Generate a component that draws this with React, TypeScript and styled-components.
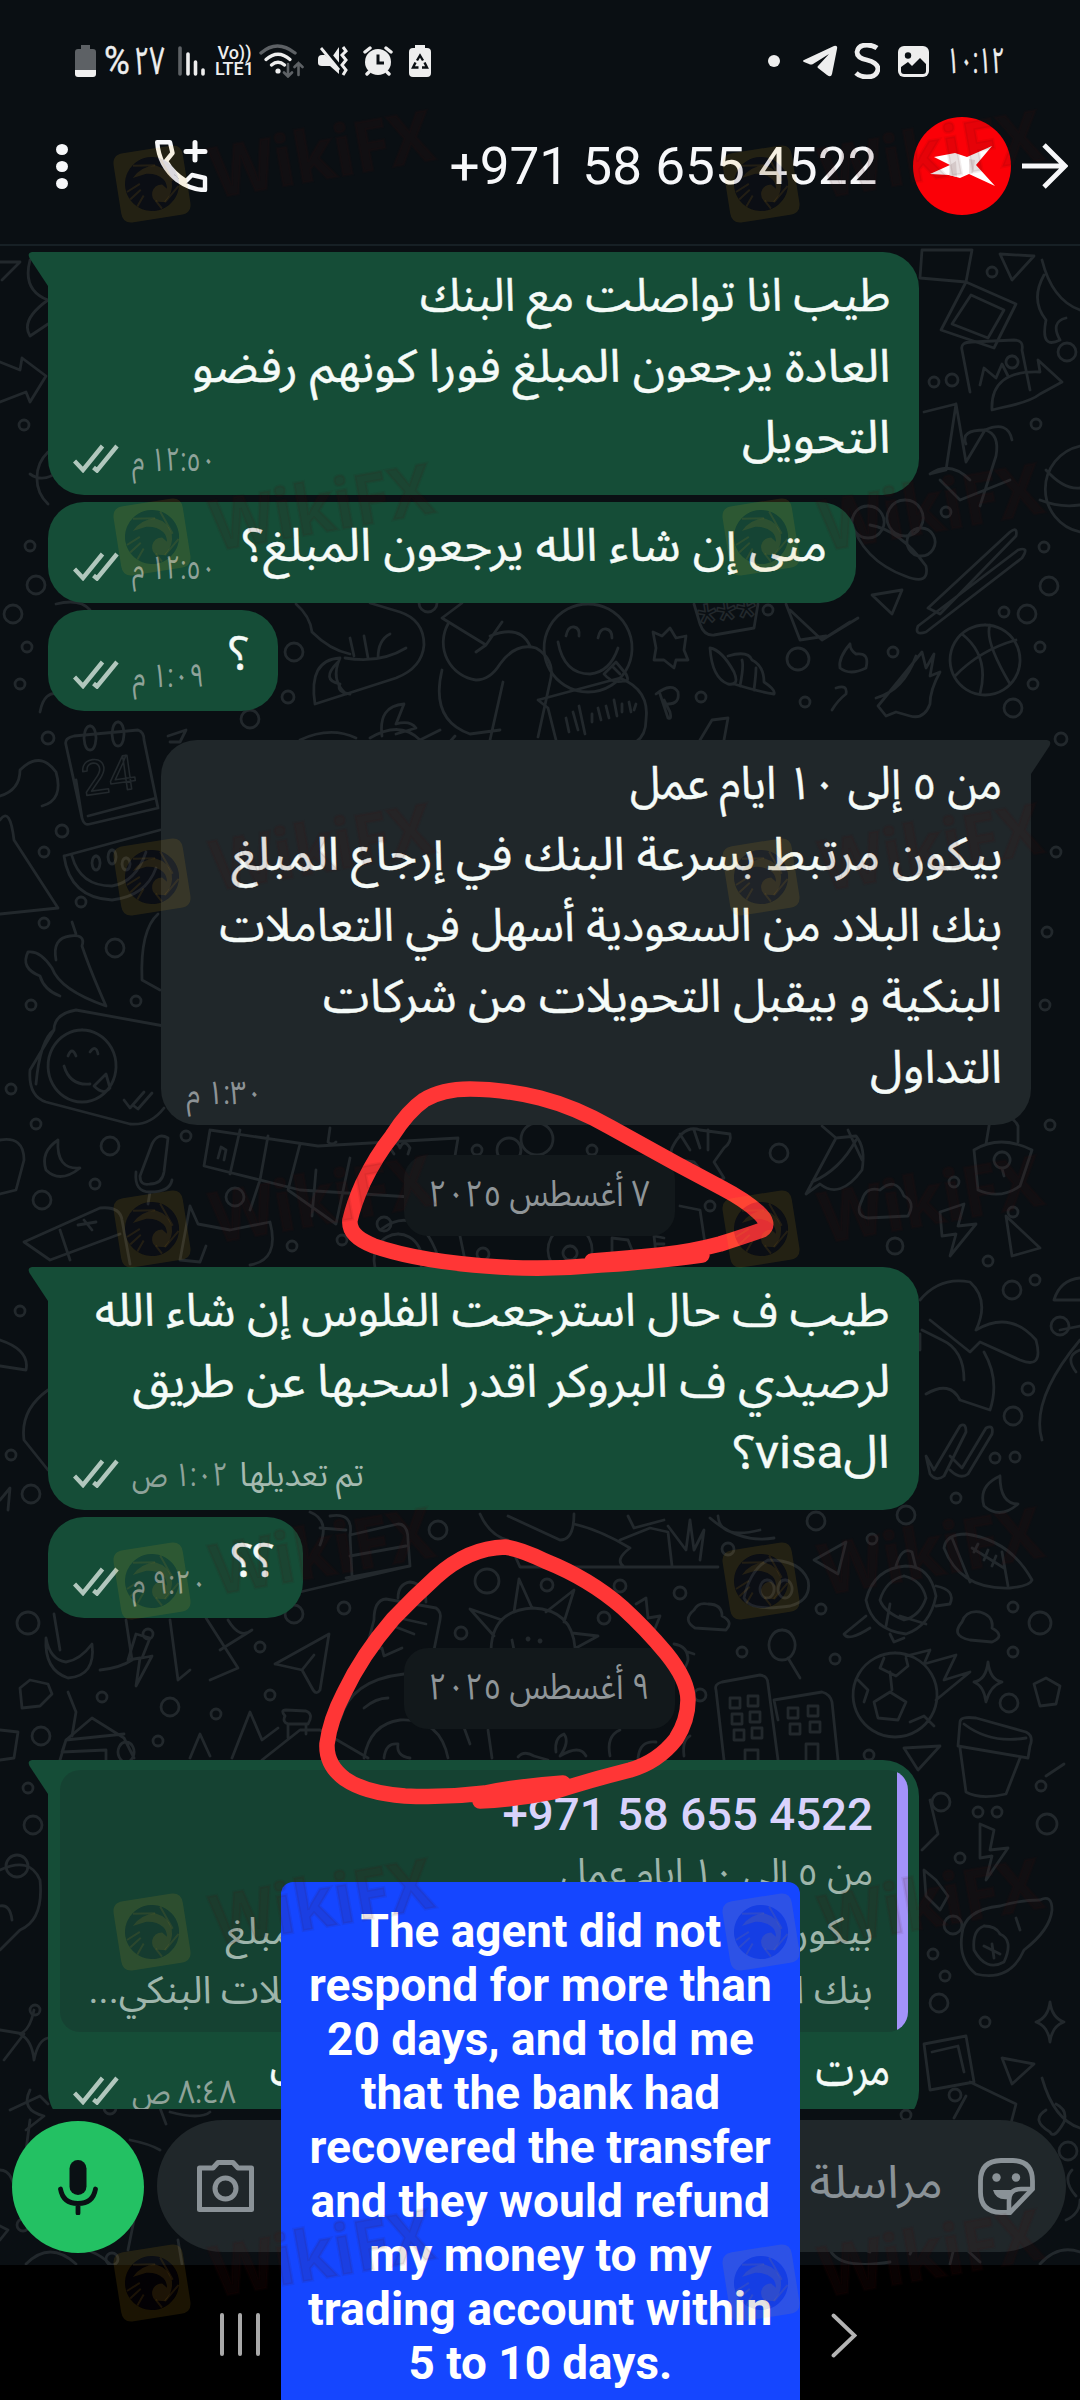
import React, { useLayoutEffect, useRef, useState } from 'react';
import styled, { createGlobalStyle } from 'styled-components';

interface FitProps {
  width: number;
  children: React.ReactNode;
}

// squeezes a single line of text to a given width
const Fit: React.FC<FitProps> = ({ width, children }) => {
  const ref = useRef<HTMLSpanElement>(null);
  const [scale, setScale] = useState(1);

  useLayoutEffect(() => {
    if (ref.current) {
      setScale(width / ref.current.offsetWidth);
    }
  }, [width]);

  return (
    <FitBox style={{ width }}>
      <FitText ref={ref} style={{ transform: `scaleX(${scale})` }}>
        {children}
      </FitText>
    </FitBox>
  );
};

const Ticks = () => (
  <TicksIcon viewBox="0 0 46 29">
    <path d="M1.5 17L10 26L29.5 2M20.500 23.500L24 26.500L44 2" />
  </TicksIcon>
);

const Tail = ({ incoming }: { incoming?: boolean }) => (
  <TailShape viewBox="0 0 22 34" $incoming={incoming}>
    <path d="M22 0H4Q-1 1 1.500 6L20 34H22Z" />
  </TailShape>
);

interface Line {
  text: string;
  width: number;
}

interface MessageProps {
  lines: Line[];
  width: number;
  time: string;
  timeWidth: number;
  incoming?: boolean;
  tail?: boolean;
  edited?: string;
  quote?: React.ReactNode;
}

const Message: React.FC<MessageProps> = props => {
  const { lines, width, time, timeWidth, incoming, tail, edited, quote } = props;
  return (
    <Bubble $width={width} $incoming={incoming} $tail={tail}>
      {tail && <Tail incoming={incoming} />}
      {quote}
      <BubbleText>
        {lines.map(line => (
          <TextLine key={line.text}>
            <Fit width={line.width}>{line.text}</Fit>
          </TextLine>
        ))}
      </BubbleText>
      <Meta $incoming={incoming}>
        {edited && (
          <Edited>
            <Fit width={124}>{edited}</Fit>
          </Edited>
        )}
        <Fit width={timeWidth}>{time}</Fit>
        {!incoming && <Ticks />}
      </Meta>
    </Bubble>
  );
};

const first: Line[] = [
  { text: 'طيب انا تواصلت مع البنك', width: 470 },
  { text: 'العادة يرجعون المبلغ فورا كونهم رفضو', width: 698 },
  { text: 'التحويل', width: 148 },
];

const answer: Line[] = [
  { text: 'من ٥ إلى ١٠ ايام عمل', width: 372 },
  { text: 'بيكون مرتبط بسرعة البنك في إرجاع المبلغ', width: 771 },
  { text: 'بنك البلاد من السعودية أسهل في التعاملات', width: 783 },
  { text: 'البنكية و بيقبل التحويلات من شركات', width: 679 },
  { text: 'التداول', width: 132 },
];

const visa: Line[] = [
  { text: 'طيب ف حال استرجعت الفلوس إن شاء الله', width: 795 },
  { text: 'لرصيدي ف البروكر اقدر اسحبها عن طريق', width: 758 },
  { text: 'الvisa؟', width: 156 },
];

const caption: Line[] = [
  { text: 'The agent did not', width: 361 },
  { text: 'respond for more than', width: 463 },
  { text: '20 days, and told me', width: 427 },
  { text: 'that the bank had', width: 359 },
  { text: 'recovered the transfer', width: 461 },
  { text: 'and they would refund', width: 459 },
  { text: 'my money to my', width: 343 },
  { text: 'trading account within', width: 464 },
  { text: '5 to 10 days.', width: 264 },
];

const watermarkRows = [144, 497, 837, 1189, 1541, 1892, 2243];

// small rings scattered between the doodles: x, y, r
const rings = [
  [992, 272, 5], [934, 382, 5], [952, 380, 6], [1067, 352, 9], [24, 425, 5], [1036, 424, 5], [946, 512, 5],
  [30, 546, 5], [13, 614, 9], [36, 585, 9], [1044, 547, 5], [1049, 586, 9], [1004, 612, 5], [1027, 614, 9],
  [27, 647, 5], [20, 684, 5], [294, 652, 9], [288, 697, 6], [250, 719, 9], [428, 603, 9], [768, 610, 5],
  [798, 659, 11], [701, 697, 5], [805, 702, 5], [893, 652, 5], [1040, 647, 5], [1033, 684, 5], [1013, 708, 9],
  [48, 738, 6], [62, 831, 6], [44, 852, 5], [81, 902, 5], [44, 923, 5], [115, 948, 9], [31, 1005, 5],
  [136, 1001, 5], [11, 1089, 5], [36, 1124, 5], [1061, 739, 6], [1056, 852, 5], [1047, 932, 5], [1045, 1005, 5],
  [110, 1146, 9], [186, 1136, 5], [95, 1184, 5], [42, 1200, 9], [235, 1197, 9], [477, 1150, 5], [509, 1150, 12],
  [537, 1139, 16], [592, 1150, 5], [779, 1153, 9], [1050, 1125, 5], [954, 1182, 5], [710, 1206, 5], [384, 1224, 7],
  [342, 1240, 5], [292, 1246, 5], [483, 1254, 6], [1013, 1212, 5], [895, 1246, 8], [988, 1261, 5], [1012, 1290, 9],
  [1035, 1280, 5], [20, 1311, 5], [1060, 1326, 9], [1028, 1389, 6], [1013, 1416, 9], [11, 1455, 5], [31, 1494, 9],
  [995, 1458, 5], [1015, 1457, 5], [956, 1498, 5], [438, 1530, 9], [816, 1521, 9], [906, 1515, 9], [728, 1549, 6],
  [872, 1539, 5], [487, 1581, 12], [547, 1585, 6], [620, 1586, 6], [680, 1593, 6], [604, 1618, 6], [821, 1609, 5],
  [28, 1623, 11], [148, 1634, 5], [344, 1608, 6], [294, 1614, 9], [461, 1633, 6], [260, 1647, 5], [742, 1652, 5],
  [835, 1659, 5], [1013, 1607, 5], [1040, 1623, 11], [102, 1697, 5], [170, 1707, 9], [270, 1695, 5], [700, 1695, 6],
  [41, 1736, 9], [158, 1741, 5], [216, 1714, 5], [1009, 1703, 9], [1013, 1652, 5], [869, 1755, 5], [941, 1802, 9],
  [28, 1788, 5], [978, 1812, 5], [997, 1812, 5], [33, 1825, 9], [17, 1866, 11], [1041, 1786, 5], [960, 1858, 5],
  [1047, 1824, 10], [953, 1925, 9], [945, 1976, 5], [933, 1954, 5], [939, 2003, 9], [985, 2022, 5], [955, 2095, 6],
  [906, 2115, 5], [1068, 2151, 9], [110, 2108, 6], [112, 2259, 6], [23, 2225, 6], [35, 2010, 5],
];

const doodles = [
  // photo frames, leaf and palms along the right edge
  'M922 250L920 278L966 282L972 250Z',
  'M966 282L1016 304L994 348L941 330Z M971 295L1004 310L988 338L952 324Z',
  'M962 350Q960 342 972 342L1014 340Q1024 340 1022 350L1030 390M962 350L970 392M980 385L984 368L996 378L1002 364L1008 376M1012 356a6 6 0 1 0 .1 0',
  'M992 410Q990 370 1040 372L1038 360L1062 382L1040 394Q1030 402 1000 408Z',
  'M1000 254L1034 256L1012 280Z M1042 260Q1052 300 1080 310M1044 275Q1030 300 1046 320Q1040 350 1060 340Q1050 322 1066 318',
  'M924 412L956 404L946 470L930 474M956 404L966 462L985 430Q960 430 966 444M985 430Q1008 420 1012 440M985 430Q1000 434 996 456L980 506M930 474Q950 460 970 480M940 480L960 500L1010 480',
  'M1080 446A44 44 0 0 0 1080 532M1046 470Q1064 490 1080 488M1040 500Q1060 508 1080 505',
  'M868 506a16 16 0 1 0 .1 0M905 500a18 18 0 1 0 .1 0M921 528a14 14 0 1 0 .1 0M851 520Q862 560 905 576Q930 586 926 566Q900 530 870 525',
  'M928 608L1010 532Q1018 526 1016 536L940 614Z M918 626L1018 550Q1030 546 1022 558L926 632Q914 636 918 626Z',
  'M872 595L902 590L892 614Z',
  // globe, arrow and ice cream at the left edge
  'M0 262L20 262L2 280M30 260Q22 290 48 300Q20 320 30 336L48 324M48 452A36 36 0 0 0 48 504M30 474Q44 484 60 470M0 362L20 370L22 358L46 376L30 402L26 392L0 402',
  'M56 604Q80 598 90 610M40 712Q44 690 60 694',
  // cat, penguin and pair of faces in the middle
  'M296 604Q310 616 312 632Q330 650 350 654M370 603L400 612Q424 620 424 645Q422 668 396 678L315 704Q308 660 340 658Q330 680 346 694M345 658Q380 664 406 648M350 638L354 656M364 636L368 658M378 658Q378 640 390 634M338 662Q320 680 340 684M340 684Q336 692 350 694',
  'M462 603L442 618L486 645L502 622M486 645L476 652M448 624A38 38 0 0 0 476 680Q490 680 500 664Q516 642 536 648Q556 660 550 682L538 737M442 670Q430 720 470 734L500 730M503 682L490 740M490 636Q520 624 530 646M455 736L446 746',
  'M588 604a44 44 0 1 0 .1 0',
  'M558 642Q564 674 590 674Q610 672 618 648M566 636Q568 626 574 627Q580 628 579 636M598 638Q600 628 606 629Q612 630 612 638M604 674L616 662L626 674Q630 682 624 681Q612 684 604 674M612 666L620 674',
  'M538 700L620 678Q650 690 646 720Q646 735 636 742M538 700L548 708L556 740M566 718L569 732M573 712L578 730M579 706L585 734M592 714L592 722M598 708L601 720M606 706L609 718M614 700L617 716M622 704L622 712M629 702L631 712M636 704L634 710',
  'M694 604L700 624Q704 636 714 635L754 628L758 604',
  'M653 632L662 636L670 628L676 638L686 636L684 650L688 660L676 660L674 668L664 660L654 660L656 648Z',
  'M710 648Q722 650 734 672Q740 686 728 684Q712 678 710 648M728 656Q748 650 752 660Q764 666 764 682Q776 690 774 694Q760 692 734 684M740 686Q744 666 742 660M754 690Q756 674 756 668',
  'M660 694L668 718Q672 720 670 712L664 700M656 694Q672 682 678 692Q680 704 668 704',
  'M850 644Q838 658 840 668Q850 676 866 668Q870 652 856 654Q850 650 850 644M790 610L822 640L858 618M822 640L850 622M786 604L800 640L826 636',
  'M985 625a35 35 0 1 0 .1 0M962 634Q990 656 980 694M1016 640Q980 650 955 676M990 625Q984 640 1010 684',
  'M876 698Q904 690 916 656M922 652L926 668L934 654L930 676L940 672Q930 690 930 704Q924 720 910 716L896 712L886 716L878 706Z',
  'M836 688Q848 684 846 694Q838 700 832 710M700 740L712 720L728 718L724 740M370 738Q400 720 420 740L440 730M300 740Q330 726 356 738M382 736Q378 706 404 704L396 724Q410 720 416 728L396 734',
  // calendar, melon, chillies and smiley card
  'M66 745Q64 738 74 736L138 730Q144 732 144 740L158 808L90 824Q84 826 82 818Z M82 818L76 780M88 816L156 798',
  'M90 726a6 12 0 1 0 .1 0M118 722a6 12 0 1 0 .1 0M168 736L186 730L180 742L170 742',
  'M0 796Q20 790 20 770Q40 750 56 772Q64 800 42 806M0 820Q10 806 14 840L58 908L0 914',
  'M64 856L160 830M64 856Q70 898 112 900Q146 896 156 868M72 856Q80 886 112 886Q136 882 146 852M96 856a4 7 0 1 0 .1 0M112 850a4 7 0 1 0 .1 0M126 858a4 6 0 1 0 .1 0',
  'M28 952Q40 950 52 968Q60 990 106 1006Q90 970 82 946Q86 934 70 936Q52 938 56 960M76 934L72 922M28 952Q20 968 40 976Q44 990 60 996',
  'M158 914Q140 930 142 980L160 990',
  'M76 1010L164 1026M76 1010Q54 1014 54 1030L30 1070Q28 1096 46 1102L130 1124Q150 1126 164 1108M54 1030Q40 1040 36 1084',
  'M82 1030a34 36 0 1 0 .1 0M64 1066Q70 1086 90 1084M68 1056Q72 1046 76 1056M90 1052Q96 1044 98 1054M94 1086L106 1074L110 1088Q104 1096 94 1086M124 1100L130 1108L144 1092M134 1106L138 1109L152 1093',
  // crossword, dice and lock under the reply
  'M210 1130L204 1166L300 1190L458 1200M210 1130L318 1146L458 1138L446 1210M240 1130L230 1174M268 1136L260 1180L250 1210M300 1144L288 1190L336 1224L350 1158M316 1170L312 1216',
  'M218 1158L221 1147L226 1150L224 1160M330 1128L328 1142Q332 1146 336 1142M394 1154L390 1148Q396 1138 400 1148Q404 1138 410 1148L408 1154',
  'M58 1140Q40 1152 46 1170Q60 1184 80 1168Q56 1170 58 1140M168 1138Q158 1132 152 1144L140 1176Q140 1186 150 1184Q162 1184 164 1172Z M136 1172Q134 1192 150 1192Q170 1192 172 1180M150 1192L148 1204',
  'M0 1140Q24 1136 24 1160L16 1190L0 1194M24 1242L100 1208Q120 1206 122 1220L130 1264M24 1242L50 1260L120 1234M60 1230L70 1260M84 1220L92 1230M78 1225L96 1222M190 1206L198 1224L230 1230L270 1222Q280 1260 250 1265M190 1206L180 1260L200 1262L206 1246',
  'M380 1230Q420 1200 440 1262M398 1234a24 26 0 1 0 .1 0M460 1236L466 1265M570 1226a22 24 0 1 0 .1 0M570 1246a7 7 0 1 0 .1 0M612 1238L628 1240L632 1250L622 1258L612 1252Z M654 1236L656 1254M654 1236L664 1238M656 1244L664 1244M680 1206L700 1210L706 1250Q700 1262 680 1262',
  'M672 1148Q684 1124 700 1130L730 1134Q732 1142 724 1148L714 1162L724 1178L712 1184L694 1162L680 1160Q668 1160 672 1148M680 1134L690 1150M694 1130L700 1148M708 1130L708 1150',
  'M806 1194L836 1138L856 1136Q866 1148 862 1170Q840 1200 820 1184ZM836 1138L822 1126M848 1130L862 1160M812 1182Q840 1170 856 1140',
  'M868 1218Q854 1216 862 1200Q866 1186 880 1190Q896 1176 904 1196Q916 1202 908 1216Z',
  'M974 1150L978 1190Q1000 1200 1020 1186L1032 1150Q1000 1134 974 1150M986 1144L990 1120Q1010 1110 1018 1126L1018 1142M1002 1152a8 8 0 1 0 .1 0M1002 1168L1004 1176',
  'M940 1212L964 1204L958 1226L976 1224L950 1256L956 1234L942 1236Z M1006 1216L1040 1248L1012 1256Z',
  // mushrooms and whale beside the third message
  'M920 1300Q940 1276 970 1282Q990 1300 976 1330Q1010 1310 1036 1340Q1044 1370 1020 1360L980 1342L970 1352L960 1344L930 1320M926 1394Q950 1380 960 1400L990 1410Q1000 1380 984 1352M922 1330L942 1340Q964 1350 964 1380M920 1334L920 1350',
  'M926 1456L934 1470L960 1426Q966 1422 966 1432L944 1476Q936 1482 930 1474Z M950 1456L962 1468L986 1428Q994 1424 992 1434L968 1474Q960 1480 950 1470',
  'M1000 1476Q978 1486 984 1506Q1000 1520 1018 1504Q1000 1504 1000 1476M1054 1300Q1060 1280 1080 1278M1054 1300L1080 1300M1060 1330L1080 1326M1080 1350Q1064 1356 1076 1372M1042 1440Q1030 1400 1080 1340',
  'M0 1340Q30 1350 26 1370L0 1366M48 1390Q20 1410 24 1440L48 1470M0 1500L10 1488L8 1510',
  // desk scene, football and turtle
  'M350 1535L398 1524Q408 1524 408 1540L410 1566L346 1578M350 1535L352 1576M350 1556L406 1546M300 1592L410 1566M350 1535Q354 1512 330 1516M346 1530L320 1528M310 1512Q330 1520 320 1545',
  'M480 1514Q490 1536 508 1540L520 1567L718 1567M508 1516L560 1540Q574 1540 574 1514M574 1524Q600 1530 630 1548Q614 1560 624 1567M620 1540L650 1528L668 1532L672 1566M628 1516L634 1528L664 1520M668 1526L686 1550L690 1520L694 1550L704 1530L700 1560M710 1518Q740 1544 774 1538M718 1516Q720 1540 760 1530',
  'M944 1548Q946 1534 966 1534Q1010 1540 1032 1580Q1030 1586 1010 1588Q960 1590 944 1548M952 1538L970 1582M1002 1552L1008 1586M972 1548L1004 1568M978 1544L974 1552M988 1550L984 1560M996 1556L992 1566',
  'M906 1566Q930 1566 936 1596Q930 1626 906 1634Q872 1630 866 1600Q874 1568 906 1566M904 1576Q922 1580 926 1598Q920 1616 904 1620Q884 1612 880 1600Q886 1580 904 1576M886 1626L890 1604M896 1566Q902 1546 912 1552L916 1568M936 1586Q956 1590 950 1604L936 1606M890 1634L894 1642L904 1638M866 1616L844 1634Q848 1642 870 1628M900 1616L926 1624',
  'M814 1560L846 1542L838 1574Z M744 1598Q750 1570 768 1560Q800 1560 808 1580Q812 1600 790 1606Q750 1612 744 1598M767 1580a7 9 0 1 0 .1 0M785 1580a7 9 0 1 0 .1 0',
  // sun, speech bubble and paper plane
  'M491 1650Q492 1610 533 1608Q572 1610 575 1648M514 1612L519 1579L532 1608M546 1612L574 1590L564 1622M572 1633L598 1636L576 1648M502 1620L470 1609L494 1636M512 1640L514 1650M528 1638a1 1 0 1 0 .1 0M540 1640a1 1 0 1 0 .1 0',
  'M374 1620Q374 1600 386 1599L436 1608Q442 1612 440 1620L434 1650M374 1620L366 1650L382 1648L384 1656L402 1648M398 1598Q398 1584 410 1582Q426 1584 426 1602M390 1616L426 1624M388 1624L414 1634',
  'M275 1664L329 1634L320 1690Q316 1696 312 1688L302 1670L314 1655M302 1670L275 1664',
  'M340 1720Q350 1680 404 1674M364 1708Q376 1698 388 1698M364 1758Q370 1724 400 1720Q440 1718 448 1758M384 1758Q386 1742 398 1744Q396 1756 410 1758M462 1722L470 1744M488 1730L492 1758',
  'M636 1604L646 1598L648 1618L660 1616L652 1636M674 1644Q688 1646 688 1660Q684 1676 670 1674M688 1652L694 1654',
  'M695 1628Q682 1620 694 1610Q698 1602 708 1604Q722 1604 722 1616Q734 1622 726 1630Z M970 1640Q950 1636 962 1622Q966 1610 980 1612Q994 1616 992 1628Q1006 1636 992 1642Z',
  'M782 1630a13 15 0 1 0 .1 0M788 1658L800 1678',
  // bananas, bolt, house and mountains bottom left
  'M46 1638Q50 1660 66 1662Q80 1660 92 1644Q96 1676 68 1678Q44 1670 46 1638M54 1614L60 1650M126 1620L132 1660Q120 1668 100 1670M170 1620L178 1680L190 1670M206 1618L238 1668L210 1680M228 1620Q240 1640 252 1630L220 1650',
  'M136 1634L128 1660L140 1658L136 1686L152 1656L142 1658L150 1638Z M20 1688L30 1680L48 1684L52 1694L40 1706L22 1708Z M68 1692L76 1712L72 1736',
  'M60 1760L66 1740L92 1718L124 1738L134 1758M66 1740L124 1734M66 1740L62 1752L106 1750L106 1760M126 1742a8 10 0 1 0 .1 0M190 1758L200 1734L210 1756M232 1758L250 1712L262 1740L278 1728M262 1760L300 1730L320 1730L368 1758M285 1716Q280 1710 286 1710L306 1711Q314 1714 308 1724L288 1724Q282 1722 285 1716M288 1724V1738M306 1724V1734M0 1730L18 1732L14 1758L0 1760',
  'M518 1757Q524 1750 534 1756L548 1760M556 1752Q554 1738 564 1734Q570 1742 560 1756Q580 1744 586 1756M610 1756Q606 1736 620 1730M638 1758Q640 1740 656 1742M684 1756Q682 1740 690 1736',
  // buildings, ball and cup
  'M716 1690Q714 1684 722 1682L760 1675Q768 1676 768 1684L778 1760M716 1690L724 1760M774 1700L822 1692Q830 1694 832 1702L838 1760M774 1700L778 1720',
  'M730 1698h10v10h-10Z M748 1696h10v10h-10Z M732 1714h10v10h-10Z M750 1712h10v10h-10Z M734 1730h10v10h-10Z M752 1728h10v10h-10Z M788 1708h10v10h-10Z M808 1706h10v10h-10Z M790 1724h10v10h-10Z M810 1722h10v10h-10Z M745 1760V1750H758V1760M806 1760V1744H818V1760',
  'M895 1653a42 42 0 1 0 .1 0M884 1658L880 1668L896 1676L908 1666L906 1658M890 1692L874 1702L878 1718L898 1720L906 1702ZM858 1680L868 1690L864 1702M910 1722L924 1716L934 1726M890 1672L892 1690M906 1656L930 1650L924 1664L956 1655L944 1680L970 1672L936 1700',
  'M988 1662Q990 1680 1002 1682Q990 1686 986 1702Q984 1686 974 1682Q986 1680 988 1662M1034 1684L1046 1678L1060 1686L1056 1704L1040 1706Z',
  'M960 1722Q960 1716 976 1718L1026 1732Q1034 1736 1030 1746L1028 1758L958 1746ZM964 1724Q990 1744 1026 1738M960 1748L966 1792Q980 1800 1006 1794L1020 1758M904 1748L940 1746L918 1770Z',
  'M0 1870Q30 1856 40 1880Q44 1920 20 1930L0 1950M0 1906Q10 1904 12 1920M34 2010Q30 2030 20 2034Q32 2040 34 2060Q38 2040 48 2038M0 2030L24 2034L4 2060M10 2110L40 2096L48 2104M30 2120L26 2150L50 2130',
  // avocado, star and frames bottom right
  'M962 1934Q958 1960 976 1974Q1010 1982 1024 1950Q1050 1930 1052 1910Q1052 1894 1040 1900Q1020 1900 1000 1906Q964 1910 962 1934M984 1926Q972 1930 974 1950Q986 1972 1004 1962Q1014 1940 1000 1934Q996 1926 984 1926M1016 1918L1020 1930M984 1946L1000 1954M992 1944L994 1958',
  'M1046 1776L1064 1764M980 1824L994 1830L990 1850L1008 1848L986 1880L992 1856L980 1858ZM930 1800L938 1834L922 1850M924 1870L936 1880L948 1896L940 1910L926 1896Z',
  'M1050 2002Q1052 2018 1064 2022Q1052 2026 1050 2042Q1048 2026 1036 2022Q1048 2018 1050 2002',
  'M924 2044L966 2036L974 2082L930 2090ZM932 2052L958 2046L964 2072M970 2082L1016 2104L1004 2150M966 2096L954 2118M1002 2058L1034 2064L1012 2084ZM1042 2078Q1054 2120 1080 2128M1046 2110Q1030 2120 1050 2132Q1054 2140 1064 2122Q1068 2110 1056 2104',
  // strip behind the composer
  'M26 2130L44 2116Q20 2110 30 2090M160 2108L166 2124M170 2112Q200 2120 210 2112M130 2140Q150 2144 160 2150M0 2170Q14 2170 16 2200M0 2226L8 2230L0 2240M140 2170L136 2210L128 2250M180 2150Q160 2180 180 2190M178 2240L182 2264M26 2264Q50 2240 76 2264M60 2250Q90 2244 110 2264',
  'M780 2250Q820 2230 870 2252M830 2250Q840 2270 890 2262M910 2254L914 2246M950 2264L956 2240L980 2262M1040 2264Q1058 2244 1080 2252M1066 2220Q1080 2214 1080 2200M1072 2170Q1062 2180 1076 2196M196 2240L190 2200',
];

const Wallpaper = () => (
  <WallpaperArt viewBox="0 246 1080 2019">
    {doodles.map(d => (
      <path key={d} d={d} />
    ))}
    {rings.map(([x, y, r]) => (
      <circle key={`${x}-${y}`} cx={x} cy={y} r={r} />
    ))}
    <WallText x="82" y="792" fontSize="48" transform="rotate(-8 110 780)">
      24
    </WallText>
    <WallText x="698" y="634" fontSize="46" transform="rotate(-8 726 620)">
      ***
    </WallText>
  </WallpaperArt>
);

const Watermark = () => (
  <WatermarkMark viewBox="0 0 340 120">
    <g transform="rotate(-9 46 78)">
      <path
        fill="#f4b41e"
        fillOpacity=".11"
        fillRule="evenodd"
        d="M22 43H70Q81 43 81 54V102Q81 113 70 113H22Q11 113 11 102V54Q11 43 22 43ZM46 51A27 27 0 1 0 46.100 51Z"
      />
      <circle cx="46" cy="78" r="27" fill="#1c0a20" fillOpacity=".12" />
      {/* gaps between the eagle's head and the shutter ring */}
      <path
        fill="#f4b41e"
        fillOpacity=".11"
        d="M45 86Q48 79 56 80L60 85Q61 79 58 75Q52 68 42 67L28 69Q38 59 52 60Q65 66 66 78Q66 90 56 98L47 96Q43 92 45 86Z"
      />
      <path
        fill="none"
        stroke="#f4b41e"
        strokeOpacity=".1"
        strokeWidth="2"
        d="M30 57L52 60M58 54L67 78M72 84L56 98M52 104L47 95M22 90L34 82M28 98L36 88M20 82L34 76"
      />
    </g>
    <text x="110" y="92" textLength="224" lengthAdjust="spacingAndGlyphs" transform="rotate(-10 110 93)">
      WikiFX
    </text>
  </WatermarkMark>
);

const StatusLeft = () => (
  <StatusIcons>
    <svg width="21" height="32" viewBox="0 0 21 32">
      <path fill="#5d6165" d="M6 0H15V4H18Q21 4 21 7V25H0V7Q0 4 3 4H6Z" />
      <path fill="#f0f0f0" d="M0 25H21V29Q21 32 18 32H3Q0 32 0 29Z" />
    </svg>
    <StatusText $gap={8} $size={38}>
      <Fit width={26}>%</Fit>
    </StatusText>
    <StatusText $gap={4} $size={39}>
      <Fit width={31}>٢٧</Fit>
    </StatusText>
    <SignalIcon width="28" height="30" viewBox="0 0 28 30" $gap={13}>
      <g strokeWidth="3.600" strokeLinecap="round" stroke="#eee">
        <path stroke="#5d6165" d="M2 2V28" />
        <path d="M10 8V28M17.500 16V28M25 24V28" />
      </g>
    </SignalIcon>
    <Volte>
      <b>Vo))</b>
      <b>LTE1</b>
    </Volte>
    <SignalIcon width="46" height="34" viewBox="0 0 46 34" $gap={5}>
      <g fill="none" strokeWidth="3.400" strokeLinecap="round" stroke="#eee">
        <path stroke="#5d6165" d="M2 9Q18-5 36 9" />
        <path d="M7 15.500Q19 5 31 15.500M12.500 21Q19 15.500 25.500 21" />
        <path stroke="#5d6165" strokeWidth="2.600" d="M29 20V32M25 28.500L29 32.500L33 28.500M39.500 31V19M35.500 23L39.500 19L43.500 23" />
      </g>
      <circle cx="19" cy="27" r="2.600" fill="#eee" />
    </SignalIcon>
    <SignalIcon width="30" height="30" viewBox="0 0 30 30" $gap={13}>
      <path fill="#eee" d="M0 13Q0 9 4 9H7L12 14L21 1V28L12 20H4Q0 20 0 17Z" />
      <path stroke="#0a0f13" strokeWidth="5" d="M4 0L24 24" />
      <path stroke="#eee" strokeWidth="2.800" d="M3 2L21 24" />
      <path fill="none" stroke="#eee" strokeWidth="3" d="M25 1L28 5L24 9L28 14L24 19L28 24L25 29" />
    </SignalIcon>
    <SignalIcon width="30" height="30" viewBox="0 0 30 30" $gap={15}>
      <circle cx="15" cy="16" r="13" fill="#eee" />
      <path fill="none" stroke="#eee" strokeWidth="3.400" strokeLinecap="round" d="M2 6L7 2M28 6L23 2M6 26L4 28M24 26L26 28" />
      <path fill="none" stroke="#0a0f13" strokeWidth="3" d="M15 8.500V17H21" />
    </SignalIcon>
    <SignalIcon width="22" height="32" viewBox="0 0 22 32" $gap={16}>
      <path fill="#eee" d="M6 0H16V3H18Q22 3 22 7V28Q22 32 18 32H4Q0 32 0 28V7Q0 3 4 3H6Z" />
      <path fill="none" stroke="#0a0f13" strokeWidth="2.400" d="M8 15.500L11 10.500L14 15.500M15.500 17.500L18 22.500H13M9.500 22.500H4L6.500 17.500" />
    </SignalIcon>
  </StatusIcons>
);

const StatusRight = () => (
  <StatusIcons>
    <StatusDot />
    <SignalIcon width="36" height="32" viewBox="0 0 36 32" $gap={22}>
      <path fill="#eee" d="M2 15L32 1Q36 0 35 4L30 29Q29 33 25 30L16 23Q15 22 16 21L27 9L11 19Q9 20 7 19L2 17Q0 16 2 15Z" />
    </SignalIcon>
    <SignalIcon width="26" height="36" viewBox="0 0 26 36" $gap={16}>
      <path fill="none" stroke="#eee" strokeWidth="4.800" d="M23 5Q19 2 13 2Q4 2 3 9Q3 15 13 17Q24 20 24 26Q23 34 13 34Q6 34 2 30" />
    </SignalIcon>
    <SignalIcon width="31" height="31" viewBox="0 0 31 31" $gap={18}>
      <rect width="31" height="31" rx="6" fill="#eee" />
      <circle cx="10" cy="9.500" r="3.200" fill="#0a0f13" />
      <path fill="#0a0f13" d="M3 21L10 16L14 20L22 12L28 18V25Q28 28 25 28H6Q3 28 3 25Z" />
    </SignalIcon>
    <StatusText $gap={18} $size={36}>
      <Fit width={58}>١٠:١٢</Fit>
    </StatusText>
  </StatusIcons>
);

const App: React.FC = (): JSX.Element => {
  return (
    <Screen>
      <GlobalStyle />
      <Wallpaper />
      <TopBar>
        <StatusBar>
          <StatusLeft />
          <StatusRight />
        </StatusBar>
        <Header>
          <svg width="46" height="46" viewBox="0 0 46 46">
            <path fill="none" stroke="#f7f8fa" strokeWidth="4.800" d="M0 23H42M22 2L43 23L22 44" />
          </svg>
          <Avatar viewBox="0 0 98 98">
            <circle cx="49" cy="49" r="49" fill="#fb0007" />
            <path fill="#fff" d="M21 40L42 36L54 40L79 29L63 48L82 69L56 57L47 61L36 58L17 57L37 48Z" />
            <path fill="#e9e3e3" d="M37 48L43 44L44 60L36 58ZM56 42L62 43L60 56L56 57Z" />
          </Avatar>
          <Phone>
            <Fit width={428}>+971 58 655 4522</Fit>
          </Phone>
          <Spacer />
          <svg width="53" height="52" viewBox="0 0 53 52">
            <g fill="none" stroke="#f7f8fa" strokeLinejoin="round">
              <path strokeWidth="4.400" d="M2.200 2.200H15L17.500 13L11 21Q18 33 31 41L37 35L50 38V50Q36 50 22 40Q4 26 2.200 2.200Z" />
              <path strokeWidth="5" strokeLinecap="round" d="M40 2.500V20M31 11.500H50" />
            </g>
          </svg>
          <MenuDots>
            <i />
            <i />
            <i />
          </MenuDots>
        </Header>
      </TopBar>
      <Chat>
        <Message lines={first} width={871} time="١٢:٥٠ م" timeWidth={84} tail />
        <Message lines={[{ text: 'متى إن شاء الله يرجعون المبلغ؟', width: 585 }]} width={808} time="١٢:٥٠ م" timeWidth={84} />
        <Message lines={[{ text: '؟', width: 20 }]} width={230} time="١:٠٩ م" timeWidth={72} />
        <Gap />
        <Message lines={answer} width={870} time="١:٣٠ م" timeWidth={76} incoming tail />
        <DateChip>
          <Fit width={221}>٧ أغسطس ٢٠٢٥</Fit>
        </DateChip>
        <Message lines={visa} width={871} time="١:٠٢ ص" timeWidth={96} edited="تم تعديلها" tail />
        <Message lines={[{ text: '؟؟', width: 43 }]} width={255} time="٩:٢٠ م" timeWidth={75} />
        <DateChip>
          <Fit width={221}>٩ أغسطس ٢٠٢٥</Fit>
        </DateChip>
        <Message
          lines={[{ text: 'مرت   عشرين يوم ولا تم ارجاع الفلوس ب', width: 620 }]}
          width={871}
          time="٨:٤٨ ص"
          timeWidth={104}
          tail
          quote={
            <Quote>
              <QuoteName>
                <Fit width={370}>+971 58 655 4522</Fit>
              </QuoteName>
              <QuoteLine>
                <Fit width={313}>من ٥ إلى ١٠ ايام عمل</Fit>
              </QuoteLine>
              <QuoteLine>
                <Fit width={648}>بيكون مرتبط بسرعة البنك في إرجاع المبلغ</Fit>
              </QuoteLine>
              <QuoteLine>
                <Fit width={784}>بنك البلاد من السعودية أسهل في التعاملات البنكي...</Fit>
              </QuoteLine>
            </Quote>
          }
        />
      </Chat>
      <Composer>
        <InputPill>
          <svg width="57" height="57" viewBox="0 0 57 57">
            <path fill="none" stroke="#8a9297" strokeWidth="4.800" d="M23 2.500H35Q54.500 3 54.500 23V31L32 54.500H23Q2.500 54 2.500 34V23Q2.500 3 23 2.500Z" />
            <path fill="none" stroke="#8a9297" strokeWidth="4.600" d="M31 54V43Q31 31 43 31H54" />
            <circle cx="18.500" cy="19.500" r="4.200" fill="#8a9297" />
            <circle cx="38" cy="19.500" r="4.200" fill="#8a9297" />
            <path fill="#8a9297" d="M15 32H38Q32 34 31 41Q18 43 15 32Z" />
          </svg>
          <Placeholder>
            <Fit width={133}>مراسلة</Fit>
          </Placeholder>
          <Spacer />
          <svg width="57" height="52" viewBox="0 0 57 52">
            <g fill="none" stroke="#8a9297" strokeWidth="5" strokeLinejoin="round">
              <path d="M2.500 8H16L21 2.500H36L41 8H54.500V49.500H2.500Z" />
              <circle cx="28.500" cy="28.500" r="10.500" />
            </g>
          </svg>
        </InputPill>
        <MicButton>
          <svg width="40" height="55" viewBox="0 0 40 55">
            <rect x="11.500" y="0" width="17" height="35" rx="8.500" fill="#0a1014" />
            <path fill="none" stroke="#0a1014" strokeWidth="4.800" strokeLinecap="round" d="M2.500 29Q5 43.500 20 43.500Q35 43.500 37.500 29M20 44V53" />
          </svg>
        </MicButton>
      </Composer>
      <NavBar>
        <svg width="40" height="43" viewBox="0 0 40 43">
          <path stroke="#a9a9a9" strokeWidth="4" strokeLinecap="round" d="M2 2V41M20 2V41M38 2V41" />
        </svg>
        <svg width="26" height="45" viewBox="0 0 26 45">
          <path fill="none" stroke="#b4b4b4" strokeWidth="3.800" strokeLinecap="round" d="M2.500 2.500L23.500 22.500L2.500 42.500" />
        </svg>
      </NavBar>
      <Scribbles viewBox="0 0 1080 2400">
        <path d="M702 1255Q640 1263 600 1265Q550 1270 500 1267Q420 1262 374 1246Q348 1236 350 1220Q354 1203 363 1183Q376 1156 392 1136Q408 1111 424 1100Q442 1089 470 1089Q503 1089 540 1098Q575 1107 610 1127L677 1164L722 1188Q745 1200 758 1212Q771 1224 762 1230Q745 1236 720 1244Q690 1252 660 1255Q630 1258 592 1261" />
        <path d="M563 1783Q520 1786 485 1793Q445 1798 405 1796Q365 1793 345 1779Q326 1765 327 1744Q330 1720 344 1693Q362 1655 393 1619Q414 1597 436 1577Q468 1548 505 1547Q520 1549 545 1561Q590 1579 623 1608Q646 1629 666 1653Q688 1680 688 1700Q688 1720 676 1739Q658 1762 630 1770Q590 1780 553 1792Q510 1800 480 1801" />
      </Scribbles>
      <Caption>
        {caption.map(line => (
          <Fit key={line.text} width={line.width}>
            {line.text}
          </Fit>
        ))}
      </Caption>
      {watermarkRows.map(top => (
        <WatermarkRow key={top} $top={top}>
          <Watermark />
          <Watermark />
        </WatermarkRow>
      ))}
    </Screen>
  );
};
export default App;

const GlobalStyle = createGlobalStyle`
  body {
    margin: 0;
    background: #000;
    font-family: Roboto, 'Noto Sans Arabic', 'DejaVu Sans', sans-serif;
  }

  svg {
    display: block;
    flex-shrink: 0;
  }
`;

const Screen = styled.div`
  position: relative;
  display: flex;
  flex-direction: column;
  width: 1080px;
  height: 2400px;
  overflow: hidden;
  background: #0a0f13;
`;

const FitBox = styled.span`
  display: flex;
  flex-shrink: 0;
  justify-content: center;
`;

const FitText = styled.span`
  flex-shrink: 0;
  white-space: pre;
`;

const WallpaperArt = styled.svg`
  position: absolute;
  top: 246px;
  left: 0;
  width: 1080px;
  height: 2019px;
  fill: none;
  stroke: #22282c;
  stroke-width: 2.8;
  stroke-linecap: round;
  stroke-linejoin: round;
`;

const WallText = styled.text`
  font-family: Roboto, sans-serif;
  stroke-width: 1.6;
`;

const TopBar = styled.div`
  position: relative;
  flex-shrink: 0;
  box-sizing: border-box;
  height: 246px;
  background: #0a0f13;
  border-bottom: 2px solid #172025;
`;

const StatusBar = styled.div`
  display: flex;
  justify-content: space-between;
  padding: 41px 75px 0;
`;

const StatusIcons = styled.div`
  display: flex;
  align-items: center;
  height: 40px;
`;

const SignalIcon = styled.svg<{ $gap: number }>`
  margin-left: ${({ $gap }) => $gap}px;
`;

const StatusText = styled.span<{ $gap: number; $size: number }>`
  margin-left: ${({ $gap }) => $gap}px;
  color: #eee;
  font-size: ${({ $size }) => $size}px;
  line-height: 40px;
  -webkit-text-stroke: 0.4px #eee;
`;

const StatusDot = styled.i`
  width: 12px;
  height: 12px;
  border-radius: 50%;
  background: #eee;
`;

const Volte = styled.div`
  display: flex;
  flex-direction: column;
  align-items: center;
  margin-left: 9px;
  color: #eee;
  font-size: 18px;
  line-height: 16px;

  b {
    font-weight: 500;
  }
`;

const Header = styled.div.attrs({ dir: 'rtl' })`
  display: flex;
  align-items: center;
  height: 98px;
  padding: 36px 12px 0 56px;
`;

const Avatar = styled.svg`
  width: 98px;
  height: 98px;
  margin-right: 11px;
`;

const Phone = styled.div`
  margin-right: 36px;
  color: #f7f8fa;
  font-size: 52px;
  direction: ltr;
`;

const Spacer = styled.div`
  flex: 1;
`;

const MenuDots = styled.div`
  display: flex;
  flex-direction: column;
  gap: 6px;
  margin-right: 87px;

  i {
    width: 12px;
    height: 11px;
    border-radius: 50%;
    background: #f7f8fa;
  }
`;

const Chat = styled.div.attrs({ dir: 'rtl' })`
  position: relative;
  display: flex;
  flex-direction: column;
  gap: 7px;
  flex-shrink: 0;
  box-sizing: border-box;
  height: 1863px;
  padding: 6px 49px 0 48px;
  overflow: hidden;
`;

const Gap = styled.div`
  flex-shrink: 0;
  height: 15px;
`;

const Bubble = styled.div<{ $width: number; $incoming?: boolean; $tail?: boolean }>`
  position: relative;
  display: grid;
  flex-shrink: 0;
  align-self: ${({ $incoming }) => ($incoming ? 'flex-start' : 'flex-end')};
  box-sizing: border-box;
  width: ${({ $width }) => $width}px;
  padding: 8px 29px 22px 25px;
  border-radius: 36px;
  border-top-left-radius: ${({ $incoming, $tail }) => ($tail && !$incoming ? 0 : 36)}px;
  border-top-right-radius: ${({ $incoming, $tail }) => ($tail && $incoming ? 0 : 36)}px;
  background: ${({ $incoming }) => ($incoming ? '#20272a' : '#154d37')};
  fill: ${({ $incoming }) => ($incoming ? '#20272a' : '#154d37')};
`;

const TailShape = styled.svg<{ $incoming?: boolean }>`
  position: absolute;
  top: 0;
  width: 22px;
  height: 34px;
  ${({ $incoming }) => ($incoming ? 'right: -20px; transform: scaleX(-1);' : 'left: -20px;')}
`;

const BubbleText = styled.div`
  grid-column: 1;
  grid-row: 2;
`;

const TextLine = styled.div`
  height: 71px;
  color: #f5fbf8;
  font-size: 46px;
  line-height: 71px;
  -webkit-text-stroke: 0.4px #f5fbf8;
`;

const Meta = styled.div<{ $incoming?: boolean }>`
  display: flex;
  grid-column: 1;
  grid-row: 2;
  align-self: end;
  align-items: center;
  justify-self: end;
  height: 34px;
  margin-bottom: ${({ $incoming }) => ($incoming ? -7 : -4)}px;
  color: ${({ $incoming }) => ($incoming ? '#8d9396' : '#8fa39a')};
  font-size: 33px;
  line-height: 34px;
`;

const Edited = styled.span`
  margin-left: 12px;
  color: #a5bab0;
`;

const TicksIcon = styled.svg`
  width: 46px;
  height: 29px;
  margin: 0 13px 4px 0;
  fill: none;
  stroke: #b1c7bd;
  stroke-width: 4.4;
`;

const DateChip = styled.div`
  display: flex;
  flex-shrink: 0;
  align-self: center;
  justify-content: center;
  box-sizing: border-box;
  width: 271px;
  height: 81px;
  margin: 23px 0 24px;
  border-radius: 24px;
  background: #12181b;
  color: #8f9598;
  font-size: 37px;
  line-height: 77px;
`;

const Quote = styled.div`
  grid-column: 1;
  grid-row: 1;
  box-sizing: border-box;
  height: 262px;
  margin: 2px -18px 2px -13px;
  padding: 16px 35px 0 0;
  border-radius: 20px;
  background: linear-gradient(to left, #a393fa 11px, #154232 11px);
`;

const QuoteName = styled.div`
  display: flex;
  justify-content: flex-end;
  height: 57px;
  color: #d9d3fc;
  font-size: 45px;
  font-weight: 500;
  line-height: 57px;
  direction: ltr;
`;

const QuoteLine = styled.div`
  height: 59px;
  color: #9eb5ab;
  font-size: 38px;
  line-height: 59px;
`;

const Composer = styled.div.attrs({ dir: 'rtl' })`
  position: relative;
  display: flex;
  flex-shrink: 0;
  box-sizing: border-box;
  height: 156px;
  padding: 11px 14px 0 12px;
  gap: 13px;
`;

const InputPill = styled.div`
  display: flex;
  flex: 1;
  align-items: center;
  box-sizing: border-box;
  height: 132px;
  padding: 0 31px 0 40px;
  border-radius: 66px;
  background: #20272a;
`;

const Placeholder = styled.div`
  margin-right: 35px;
  padding-bottom: 6px;
  color: #8a9297;
  font-size: 46px;
`;

const MicButton = styled.button`
  display: flex;
  align-items: center;
  justify-content: center;
  width: 132px;
  height: 132px;
  margin: 1px 0 0;
  padding: 0;
  border: 0;
  border-radius: 50%;
  background: #23c163;
`;

const NavBar = styled.div`
  position: relative;
  display: flex;
  flex: 1;
  align-items: flex-start;
  justify-content: space-between;
  padding: 48px 223px 0 220px;
  background: #000;
`;

const Scribbles = styled.svg`
  position: absolute;
  top: 0;
  left: 0;
  width: 1080px;
  height: 2400px;
  fill: none;
  stroke: #ff3636;
  stroke-width: 15.5;
  stroke-linecap: round;
  stroke-linejoin: round;
`;

const Caption = styled.div`
  position: absolute;
  top: 1882px;
  left: 281px;
  display: flex;
  flex-direction: column;
  align-items: center;
  box-sizing: border-box;
  width: 519px;
  height: 518px;
  padding-top: 22px;
  border-radius: 12px 12px 0 0;
  background: #1546ff;
  color: #fff;
  font-size: 46px;
  font-weight: 700;
  line-height: 54px;
`;

const WatermarkRow = styled.div<{ $top: number }>`
  position: absolute;
  top: ${({ $top }) => $top - 38}px;
  left: 106px;
  display: flex;
  gap: 269px;
`;

const WatermarkMark = styled.svg`
  width: 340px;
  height: 120px;
  overflow: visible;

  text {
    font-family: 'Open Sans', sans-serif;
    font-size: 70px;
    font-weight: 700;
    fill: #4a1212;
    fill-opacity: 0.12;
    stroke: #4a1212;
    stroke-width: 3;
    stroke-opacity: 0.07;
  }
`;
